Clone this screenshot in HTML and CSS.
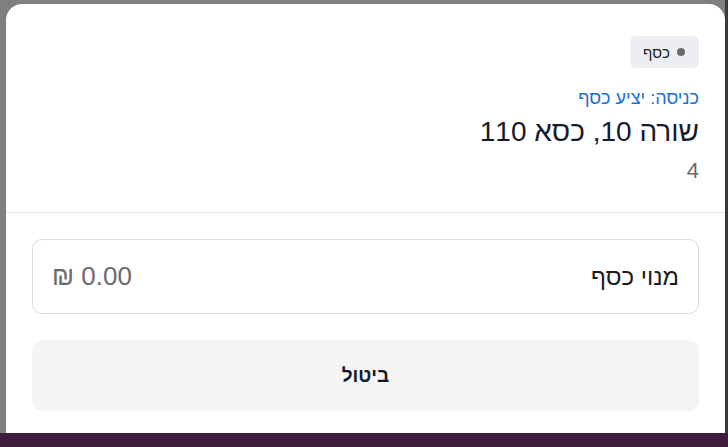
FILE: index.html
```html
<!DOCTYPE html>
<html lang="he" dir="rtl">
<head>
<meta charset="utf-8">
<link rel="stylesheet" href="styles.css">
</head>
<body>
<div class="backdrop">
  <div class="modal">
    <div class="modal-head">
      <div class="badge-row"><span class="badge"><span class="dot"></span>כסף</span></div>
      <div class="entrance">כניסה: יציע כסף</div>
      <div class="seat">שורה 10, כסא 110</div>
      <div class="count">4</div>
    </div>
    <div class="modal-body">
      <div class="ticket">
        <span class="ticket-name">מנוי כסף</span>
        <span class="ticket-price">₪ 0.00</span>
      </div>
      <button class="cancel">ביטול</button>
    </div>
  </div>
</div>
<div class="taskbar"></div>
</body>
</html>
```
FILE: styles.css
```css
html, body {
  margin: 0;
  padding: 0;
  height: 100%;
  overflow: hidden;
}
body {
  background: #7f7f7f;
  font-family: "Liberation Sans", "DejaVu Sans", sans-serif;
  color: #1b2131;
}
.backdrop {
  padding: 4px 3px 0 6px;
  background: linear-gradient(to left, #3a3a3a 0 3px, #7f7f7f 3px);
  height: 100%;
  box-sizing: border-box;
}
.modal {
  background: #fff;
  border-radius: 16px 16px 0 0;
  height: 440px;
}
.modal-head {
  padding: 32px 26px 0 26px;
  height: 176px;
  border-bottom: 1px solid #e2e2e2;
}
.badge-row {
  display: flex;
}
.badge {
  display: inline-flex;
  align-items: center;
  gap: 7px;
  height: 32px;
  padding: 0 14px 0 13px;
  background: #eceef1;
  border-radius: 6px;
  font-size: 15px;
  color: #222;
}
.dot {
  width: 8px;
  height: 8px;
  border-radius: 50%;
  background: #6b6b6b;
}
.entrance {
  margin-top: 20px;
  font-size: 18px;
  color: #1a70d8;
  line-height: 20px;
}
.seat {
  margin-top: 8px;
  font-size: 28px;
  line-height: 32px;
  color: #141b2d;
}
.count {
  margin-top: 10px;
  font-size: 22px;
  line-height: 26px;
  color: #6b6b6b;
}
.modal-body {
  padding: 26px 26px 0 26px;
  display: flex;
  flex-direction: column;
  gap: 26px;
}
.ticket {
  height: 75px;
  box-sizing: border-box;
  border: 1px solid #dcdcdc;
  border-radius: 10px;
  display: flex;
  align-items: center;
  justify-content: space-between;
  padding: 0 19px 0 19px;
}
.ticket-name {
  font-size: 24px;
  color: #1b1b1b;
}
.ticket-price {
  font-size: 26px;
  color: #6b6b6b;
  direction: ltr;
}
.cancel {
  height: 71px;
  border: none;
  border-radius: 10px;
  background: #f5f5f5;
  font-family: inherit;
  font-size: 19px;
  font-weight: bold;
  color: #141b2d;
}
.taskbar {
  position: fixed;
  left: 0;
  right: 0;
  bottom: 0;
  height: 14px;
  background: #3e1d3d;
}
```
